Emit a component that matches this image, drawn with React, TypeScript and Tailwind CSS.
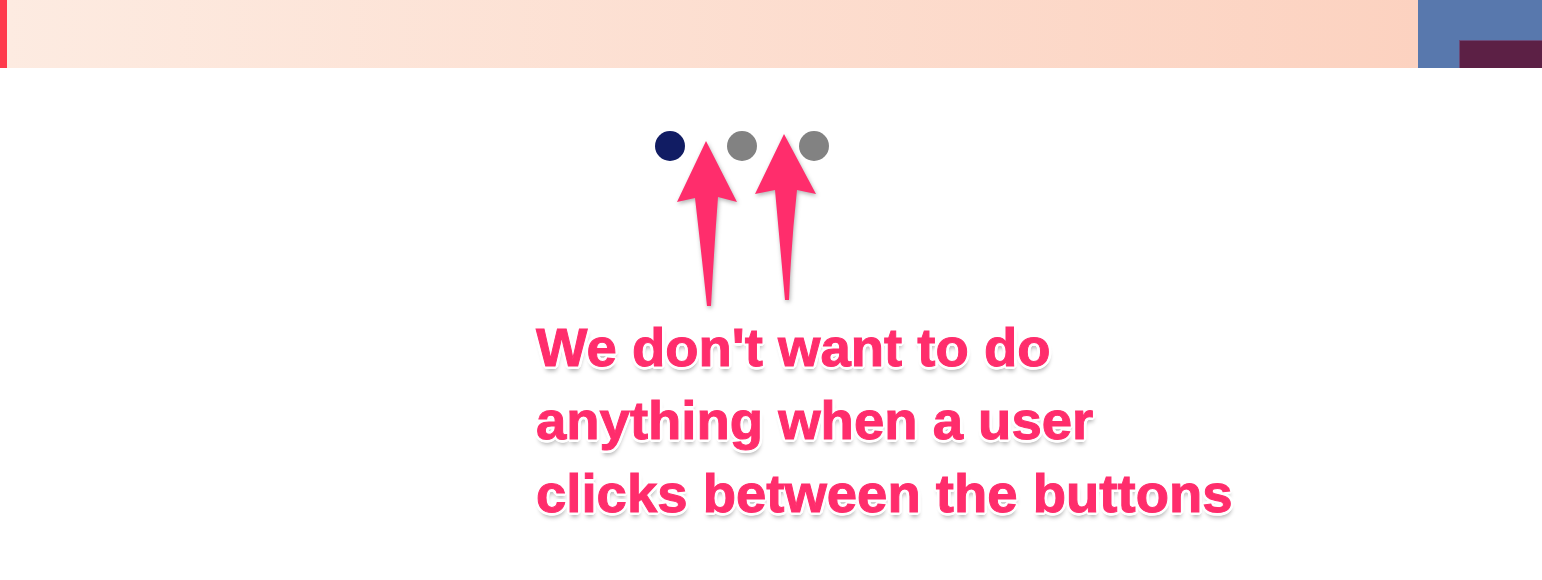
import React from "react";

export default function App() {
  return (
    <div className="relative w-[1542px] h-[580px] bg-white overflow-hidden font-['Liberation_Sans',Arial,sans-serif]">
      <div className="flex h-[68px]">
        <div className="w-[7px] bg-[#ff3a4c]" />
        <div className="flex-1 bg-[linear-gradient(to_right,#fdebe1,#fcd2c0)]" />
        <div className="w-[124px] bg-[#5878ad] flex flex-col">
          <div className="h-[40px]" />
          <div className="flex-1 flex">
            <div className="w-[41px]" />
            <div className="flex-1 bg-[#5c2045] border-l border-t border-[#6a4a78]" />
          </div>
        </div>
      </div>

      <div className="flex gap-[42px] pl-[655px] pt-[63px]">
        <div className="w-[30px] h-[30px] rounded-full bg-[#111c63]" />
        <div className="w-[30px] h-[30px] rounded-full bg-[#828282]" />
        <div className="w-[30px] h-[30px] rounded-full bg-[#828282]" />
      </div>

      <div className="pl-[536px] pt-[150px] text-[54.5px] leading-[73px] font-bold text-[#ff2d6c] [-webkit-text-stroke:1px_#ff2d6c] [text-shadow:3px_0_0_#fff,-3px_0_0_#fff,0_3px_0_#fff,0_-3px_0_#fff,2px_2px_0_#fff,-2px_-2px_0_#fff,2px_-2px_0_#fff,-2px_2px_0_#fff,3px_1px_0_#fff,-3px_1px_0_#fff,1px_3px_0_#fff,-1px_3px_0_#fff,3px_-1px_0_#fff,-3px_-1px_0_#fff,1px_-3px_0_#fff,-1px_-3px_0_#fff,1px_5px_4px_rgba(0,0,0,0.3)]">
        <div>We don't want to do</div>
        <div>anything when a user</div>
        <div>clicks between the buttons</div>
      </div>

      <svg
        className="absolute left-0 top-0 pointer-events-none [filter:drop-shadow(1px_2px_2px_rgba(0,0,0,0.3))]"
        width="1542"
        height="580"
        viewBox="0 0 1542 580"
      >
        <path
          d="M706 141 L737 202 L718 197 Q714 250 711 306 L707 306 Q701 250 695 198 L677 202 Z"
          fill="#ff2d6c"
        />
        <path
          d="M784 134 L816 194 L797 190 Q791 245 789 300 L785 300 Q780 245 775 190 L755 194 Z"
          fill="#ff2d6c"
        />
      </svg>
    </div>
  );
}
